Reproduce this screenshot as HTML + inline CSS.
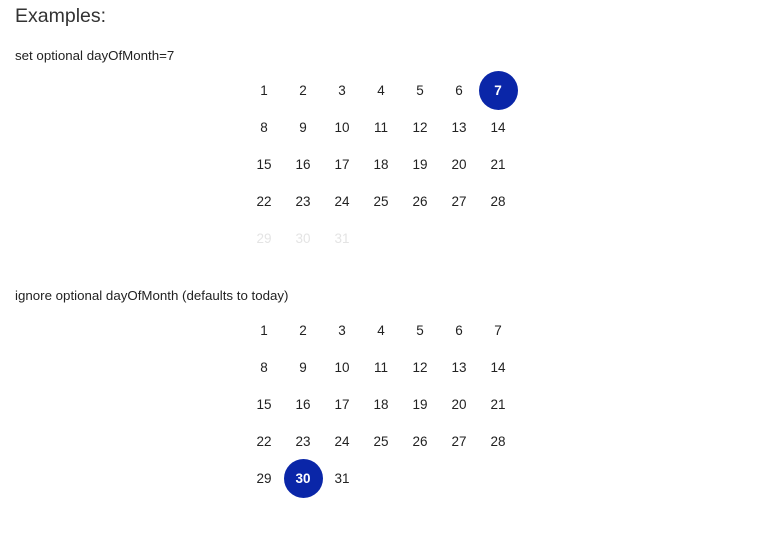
<!DOCTYPE html><html><head><style>
body{margin:0;width:768px;height:551px;background:#fff;font-family:"Liberation Sans",sans-serif;color:#222;position:relative;overflow:hidden}
h1{position:absolute;left:15px;top:5px;margin:0;font-weight:normal;font-size:19.5px;color:#333}
.l{position:absolute;left:15px;font-size:13.3px;color:#222}
.d{position:absolute;width:39px;height:39px;line-height:39px;text-align:center;font-size:13.5px;margin-left:-19.5px;margin-top:-19.5px}
.g{color:#e4e4e4}
.s{background:#0a26a8;color:#fff;border-radius:50%;font-weight:bold}
</style></head><body>
<h1>Examples:</h1>
<div class="l" style="top:48px">set optional dayOfMonth=7</div>
<div class="l" style="top:288px">ignore optional dayOfMonth (defaults to today)</div>
<div id="c"></div>
<script>
var h='';
function cal(top,sel,grey){for(var i=1;i<=31;i++){var r=Math.floor((i-1)/7),c=(i-1)%7;var cls='d'+(i==sel?' s':'')+(grey&&i>28?' g':'');h+='<div class="'+cls+'" style="left:'+(264+39*c)+'px;top:'+(top+37*r)+'px">'+i+'</div>';}}
cal(90,7,true);cal(330,30,false);
document.getElementById('c').innerHTML=h;
</script>
</body></html>
